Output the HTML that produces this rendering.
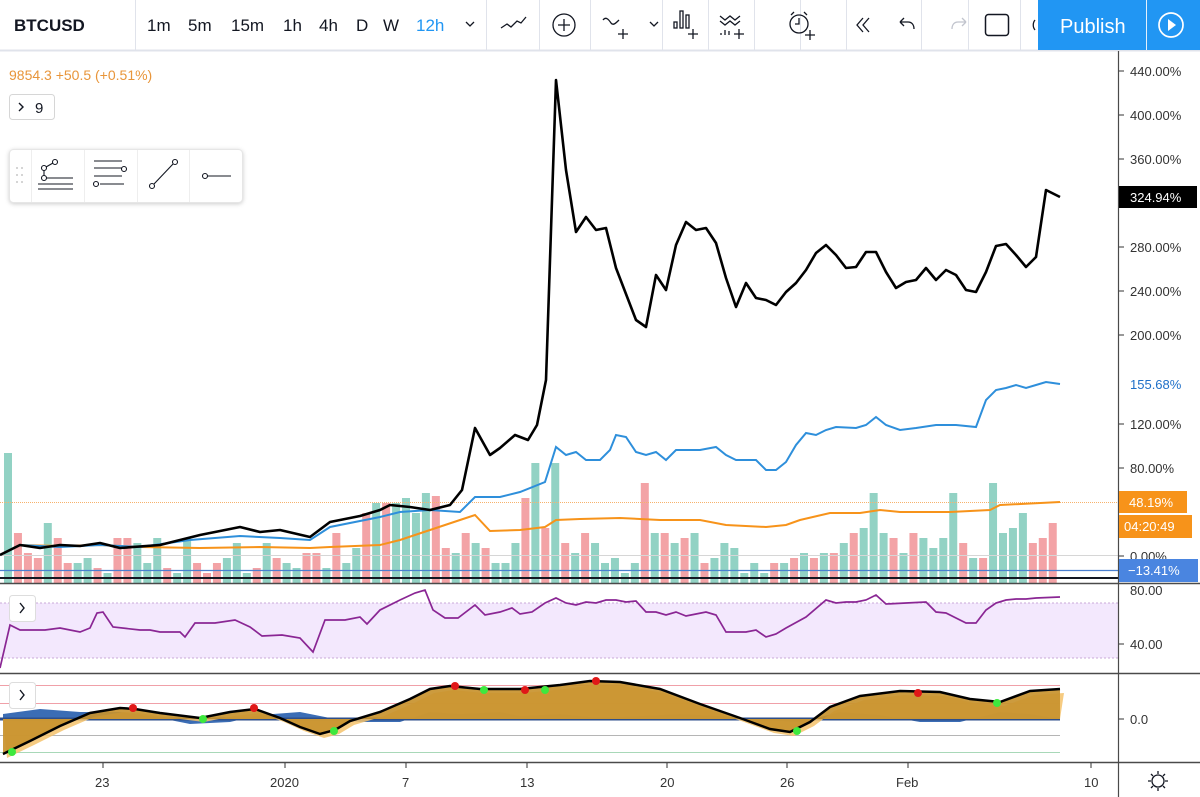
<!DOCTYPE html>
<html><head><meta charset="utf-8"><style>
body{margin:0;width:1200px;height:797px;overflow:hidden;background:#fff;font-family:"Liberation Sans","DejaVu Sans",sans-serif;}
svg{position:absolute;left:0;top:0}
</style></head><body>
<svg id="s" width="1200" height="797" xmlns="http://www.w3.org/2000/svg" font-family="Liberation Sans, DejaVu Sans, sans-serif">
<rect x="0" y="0" width="1200" height="50" fill="#fff"/>
<line x1="0" y1="50.5" x2="1200" y2="50.5" stroke="#e0e3eb" stroke-width="2"/>
<text x="14" y="31" font-size="17" font-weight="bold" fill="#131722">BTCUSD</text>
<line x1="135.5" y1="0" x2="135.5" y2="50" stroke="#e0e3eb"/>
<g font-size="17" fill="#131722">
<text x="147" y="31">1m</text><text x="188" y="31">5m</text><text x="231" y="31">15m</text><text x="283" y="31">1h</text><text x="319" y="31">4h</text><text x="356" y="31">D</text><text x="383" y="31">W</text><text x="416" y="31" fill="#2196f3">12h</text>
</g>
<path d="M466 22l4 4 4-4" fill="none" stroke="#131722" stroke-width="1.3"/>
<g stroke="#e0e3eb"><line x1="486.5" y1="0" x2="486.5" y2="50"/><line x1="539.5" y1="0" x2="539.5" y2="50"/><line x1="590.5" y1="0" x2="590.5" y2="50"/><line x1="662.5" y1="0" x2="662.5" y2="50"/><line x1="708.5" y1="0" x2="708.5" y2="50"/><line x1="754.5" y1="0" x2="754.5" y2="50"/><line x1="800.5" y1="0" x2="800.5" y2="50"/><line x1="846.5" y1="0" x2="846.5" y2="50"/><line x1="921.5" y1="0" x2="921.5" y2="50"/><line x1="968.5" y1="0" x2="968.5" y2="50"/><line x1="1020.5" y1="0" x2="1020.5" y2="50"/></g>
<g fill="none" stroke="#131722" stroke-width="1.3">
<path d="M501 28l6-4 4 3 6-6 4 2 5-6"/>
<circle cx="564" cy="25" r="11"/><path d="M564 19v12M558 25h12"/>
<path d="M603 20c3-4 6 0 8 3 2 3 5 0 8-3M623 29v10M618 34h10"/>
<path d="M650 22l4 4 4-4"/>
<rect x="674" y="22" width="3" height="6"/><rect x="680" y="11" width="3" height="17"/><rect x="686" y="15" width="3" height="13"/><path d="M693 29v10M688 34h10"/>
<path d="M720 16l5 4 5-4 5 4 5-4M720 21l5 4 5-4 5 4 5-4M739 29v10M734 34h10M721 33v2M725 30v5M729 31v4"/>
<circle cx="799" cy="24" r="9"/><path d="M799 18v6h-4M791 15l3-3M807 15l-3-3M810 30v10M805 35h10"/>
<path d="M863 18l-6 7 6 7M869 18l-6 7 6 7"/>
<path d="M900 22h8c4 0 6 3 6 7M900 22l4-4M900 22l4 4"/>
</g>
<path d="M952 29c0-4 2-7 6-7h8M966 22l-4-4M966 22l-4 4" fill="none" stroke="#c1c4cd" stroke-width="1.3"/>
<rect x="985.5" y="14.5" width="23" height="21" rx="3" fill="none" stroke="#131722" stroke-width="1.5"/>
<path d="M1035 20a8 8 0 0 0 0 10" fill="none" stroke="#131722" stroke-width="1.3"/>
<rect x="1038" y="0" width="162" height="50" fill="#2196f3"/>
<line x1="1146.5" y1="0" x2="1146.5" y2="50" stroke="#e3f0fc" stroke-width="1"/>
<text x="1060" y="33" font-size="20" fill="#fff">Publish</text>
<circle cx="1171" cy="25" r="12" fill="none" stroke="#fff" stroke-width="1.7"/>
<path d="M1168 19v12l8-6z" fill="#fff"/>

<rect x="0" y="603" width="1118" height="55" fill="#f3e8fd"/>
<line x1="0" y1="603" x2="1118" y2="603" stroke="#c8a8d8" stroke-dasharray="2,2"/>
<line x1="0" y1="658" x2="1118" y2="658" stroke="#c8a8d8" stroke-dasharray="2,2"/>
<g id="vol"></g>
<line x1="0" y1="502.5" x2="1118" y2="502.5" stroke="#f7b26c" stroke-width="1" stroke-dasharray="1,1"/>
<line x1="0" y1="555.5" x2="1118" y2="555.5" stroke="#d6d6d6"/>
<line x1="0" y1="570.5" x2="1118" y2="570.5" stroke="#4a7fd0" stroke-width="1.2"/>
<line x1="0" y1="578" x2="1118" y2="578" stroke="#131722" stroke-width="2"/>
<g id="lines"></g>
<line x1="0" y1="583.5" x2="1200" y2="583.5" stroke="#4a4a4a" stroke-width="1.5"/>
<line x1="0" y1="673.5" x2="1200" y2="673.5" stroke="#4a4a4a" stroke-width="1.5"/>
<line x1="0" y1="762.5" x2="1200" y2="762.5" stroke="#4a4a4a" stroke-width="1.5"/>
<line x1="1118.5" y1="51" x2="1118.5" y2="797" stroke="#4a4a4a" stroke-width="1.2"/>
<g font-size="13" fill="#333">
<text x="1130" y="76">440.00%</text><text x="1130" y="120">400.00%</text><text x="1130" y="164">360.00%</text><text x="1130" y="252">280.00%</text><text x="1130" y="296">240.00%</text><text x="1130" y="340">200.00%</text><text x="1130" y="429">120.00%</text><text x="1130" y="473">80.00%</text><text x="1130" y="561">0.00%</text>
<text x="1130" y="595">80.00</text><text x="1130" y="649">40.00</text><text x="1130" y="724">0.0</text>
</g>
<g stroke="#333"><path d="M1119 71h5M1119 115h5M1119 159h5M1119 247h5M1119 291h5M1119 335h5M1119 424h5M1119 468h5M1119 556h5M1119 644h5M1119 719h5M103 763v5M285 763v5M406 763v5M527 763v5M667 763v5M787 763v5M908 763v5M1091 763v5"/></g>
<rect x="1119" y="186" width="78" height="22" fill="#000"/><text x="1130" y="202" font-size="13" fill="#fff">324.94%</text>
<text x="1130" y="389" font-size="13" fill="#1e6fc8">155.68%</text>
<rect x="1119" y="491" width="68" height="22" fill="#f7931a"/><text x="1129" y="507" font-size="13" fill="#fff">48.19%</text>
<rect x="1119" y="515" width="73" height="23" fill="#f7931a"/><text x="1124" y="531" font-size="13" fill="#fff">04:20:49</text>
<rect x="1119" y="559" width="79" height="23" fill="#4a85e0"/><text x="1128" y="575" font-size="13" fill="#fff">−13.41%</text>
<g font-size="13" fill="#333">
<text x="95" y="787">23</text><text x="270" y="787">2020</text><text x="402" y="787">7</text><text x="520" y="787">13</text><text x="660" y="787">20</text><text x="780" y="787">26</text><text x="896" y="787">Feb</text><text x="1084" y="787">10</text>
</g>
<g fill="none" stroke="#131722" stroke-width="1.3"><circle cx="1158" cy="781" r="6"/><path d="M1158 771v3M1158 788v3M1148 781h3M1165 781h3M1151 774l2 2M1163 786l2 2M1151 788l2-2M1163 776l2-2"/></g>

<text x="9" y="80" font-size="14" fill="#e8953a">9854.3 +50.5 (+0.51%)</text>
<rect x="9.5" y="94.5" width="45" height="25" rx="3" fill="#fff" stroke="#d6d6d6"/>
<path d="M19 103l4 4-4 4" fill="none" stroke="#131722" stroke-width="1.4"/><text x="35" y="113" font-size="15" fill="#131722">9</text>
<rect x="9.5" y="149.5" width="233" height="53" rx="4" fill="#fff" stroke="#e6e6e6" style="filter:drop-shadow(0 1px 2px rgba(0,0,0,.2))"/>
<g stroke="#eee"><line x1="31.5" y1="150" x2="31.5" y2="202"/><line x1="84.5" y1="150" x2="84.5" y2="202"/><line x1="137.5" y1="150" x2="137.5" y2="202"/><line x1="189.5" y1="150" x2="189.5" y2="202"/></g>
<g fill="#c8c8c8"><circle cx="17" cy="168" r="1"/><circle cx="22" cy="168" r="1"/><circle cx="17" cy="175" r="1"/><circle cx="22" cy="175" r="1"/><circle cx="17" cy="182" r="1"/><circle cx="22" cy="182" r="1"/></g>
<g fill="none" stroke="#131722" stroke-width="1.1">
<circle cx="44" cy="168" r="2.5"/><circle cx="44" cy="178" r="2.5"/><circle cx="55" cy="162" r="2.5"/><path d="M46 167l7-4M44 170v6M47 178h26M38 184h35M38 189h35"/>
<path d="M94 161h28M94 168h28M94 176h28M100 184h24"/><circle cx="124" cy="169" r="2.5"/><circle cx="96" cy="184" r="2.5"/>
<circle cx="152" cy="186" r="2.5"/><circle cx="175" cy="162" r="2.5"/><path d="M154 184l19-20"/>
<circle cx="205" cy="176" r="2.5"/><path d="M208 176h23"/>
</g>
<rect x="9.5" y="595.5" width="26" height="26" rx="3" fill="#fff" stroke="#ddd"/><path d="M20 603l4 5-4 5" fill="none" stroke="#131722" stroke-width="1.4"/>
<rect x="9.5" y="682.5" width="26" height="26" rx="3" fill="#fff" stroke="#ddd"/><path d="M20 690l4 5-4 5" fill="none" stroke="#131722" stroke-width="1.4"/>
</svg>
<script>
function P(a){return a.map((p,i)=>(i?'L':'M')+p[0]+' '+p[1]).join('');}
var NS='http://www.w3.org/2000/svg';
function add(g,tag,at){var e=document.createElementNS(NS,tag);for(var k in at)e.setAttribute(k,at[k]);document.getElementById(g).appendChild(e);return e;}
var H=[130,50,30,25,60,45,20,20,25,15,10,45,45,40,20,45,15,10,45,20,10,20,25,40,10,15,40,25,20,15,30,30,15,50,20,35,70,80,80,80,85,70,90,60,35,30,50,40,35,20,20,40,85,120,55,50,40,30,50,40,20,25,10,20,90,50,50,40,45,50,20,25,40,35,10,20,10,20,20,25,30,25,30,30,40,50,55,45,50,45,30,50,45,35,45,90,40,25,25,45,50,55,45,40,45,60,35,25,25,25,22];
var C="gpppgppggpgppgggpggpppgggpgpggppgpggpgpgggggpgpgpgggpgpgpgpgggggggpgpgpggggggpgpgpgpgpgpgpgpggggpgpgggpppppggggggggggg";
for(var i=0;i<106;i++){var x=8+i*9.95;var h=H[i%H.length];var c=C[i]=='p'?'#f3a3a6':'#92d2c4';
 if(Math.abs(x-12)<5)h=130,c='#92d2c4';if(Math.abs(x-435)<5)h=87,c='#f3a3a6';if(Math.abs(x-555)<5)h=120,c='#92d2c4';if(Math.abs(x-645)<5)h=100,c='#f3a3a6';if(Math.abs(x-877)<5)h=90,c='#92d2c4';if(Math.abs(x-997)<5)h=100,c='#92d2c4';if(Math.abs(x-1018)<5)h=70,c='#92d2c4';
 if(x>1060)break;
 add('vol','rect',{x:x-4,y:583-h,width:8,height:h,fill:c});}
var O=[[3,755],[30,742],[60,727],[90,714],[120,709],[135,710],[160,714],[200,719],[230,713],[255,710],[280,719],[300,728],[320,735],[335,731],[350,722],[380,713],[410,700],[430,690],[450,687],[480,690],[520,690],[560,686],[590,682],[620,683],[660,690],[700,705],[740,719],[770,730],[790,733],[810,723],[830,708],[860,697],[900,692],[940,693],[970,700],[1000,703],[1030,692],[1060,690]];
[[0,685,'#f0a0a8'],[0,703,'#f0a0a8'],[0,735,'#b5b5b5'],[0,752,'#a8d8b8']].forEach(l=>add('lines','line',{x1:l[0],y1:l[1]+.5,x2:1060,y2:l[1]+.5,stroke:l[2]}));
var B=[[3,719],[3,714],[40,709],[80,712],[120,712],[150,716],[190,724],[230,722],[260,715],[300,712],[330,718],[360,722],[400,722],[430,712],[460,714],[500,712],[520,716],[560,714],[600,718],[640,716],[680,714],[720,716],[760,720],[800,722],[840,712],[880,715],[920,722],[960,722],[1000,712],[1030,714],[1060,719]];
add('lines','path',{d:P(B)+'L1060 719Z',fill:'#3b6db5'});
add('lines','line',{x1:0,y1:719,x2:1060,y2:719,stroke:'#2d4e8a','stroke-width':3});
add('lines','path',{d:P(O.map(p=>[p[0]+4,p[1]+3]))+'L1060 719L3 719Z',fill:'#f5c26b',opacity:0.85});
add('lines','path',{d:P(O)+'L1060 719L3 719Z',fill:'#c8922e',opacity:0.92});
add('lines','path',{d:P(O.map(p=>[p[0],p[1]-1])),fill:'none',stroke:'#000','stroke-width':2.5});
[[133,708,'#e01818'],[254,708,'#e01818'],[455,686,'#e01818'],[525,690,'#e01818'],[596,681,'#e01818'],[918,693,'#e01818'],[203,719,'#3ee83e'],[334,731,'#3ee83e'],[484,690,'#3ee83e'],[545,690,'#3ee83e'],[797,731,'#3ee83e'],[997,703,'#3ee83e'],[12,752,'#3ee83e']].forEach(d=>add('lines','circle',{cx:d[0],cy:d[1],r:4,fill:d[2]}));
var R=[[0,668],[10,625],[20,630],[45,630],[60,628],[80,632],[90,628],[97,613],[103,612],[113,627],[140,630],[150,630],[160,632],[180,632],[185,637],[195,623],[215,623],[235,620],[250,627],[262,636],[282,635],[300,638],[313,652],[325,620],[345,620],[360,617],[367,624],[380,610],[400,600],[415,593],[425,590],[433,610],[445,618],[458,618],[475,605],[485,615],[500,612],[512,608],[520,614],[532,612],[545,603],[556,598],[566,603],[576,605],[586,602],[596,603],[606,600],[616,600],[626,602],[636,601],[646,612],[656,612],[666,615],[676,612],[686,616],[696,614],[706,612],[716,615],[726,632],[746,632],[756,630],[766,637],[776,634],[786,628],[806,617],[826,600],[836,603],[846,602],[856,602],[866,600],[876,595],[886,604],[906,603],[926,602],[936,612],[946,613],[956,618],[966,623],[976,623],[986,610],[996,603],[1006,600],[1016,599],[1026,599],[1036,598],[1060,597]];
add('lines','path',{d:P(R),fill:'none',stroke:'#8a2694','stroke-width':1.7});
var OR=[[0,555],[20,545],[60,546],[100,545],[140,547],[200,548],[260,547],[310,548],[330,547],[380,545],[400,540],[430,530],[460,520],[475,515],[490,531],[520,530],[545,527],[556,520],[580,519],[620,518],[660,520],[700,520],[726,525],[766,527],[786,525],[800,520],[830,513],[860,513],[880,510],[900,512],[950,512],[990,510],[1000,505],[1060,502]];
add('lines','path',{d:P(OR),fill:'none',stroke:'#f7931a','stroke-width':2});
var BL=[[0,555],[20,545],[60,547],[100,545],[140,547],[190,540],[240,536],[280,538],[310,540],[330,527],[380,517],[400,512],[430,510],[460,512],[475,497],[500,497],[520,492],[545,482],[556,447],[566,455],[576,452],[586,460],[600,460],[610,450],[616,435],[626,437],[636,452],[646,455],[656,452],[666,460],[676,450],[700,450],[716,447],[726,455],[736,460],[756,460],[766,470],[776,470],[786,462],[796,445],[806,433],[816,435],[826,430],[836,427],[856,428],[866,425],[876,417],[886,425],[900,430],[916,428],[936,425],[956,425],[976,427],[986,400],[996,390],[1006,388],[1016,385],[1026,388],[1036,385],[1046,382],[1060,384]];
add('lines','path',{d:P(BL),fill:'none',stroke:'#2e8fdb','stroke-width':2});
var K=[[0,555],[20,545],[40,548],[60,545],[80,546],[100,543],[120,548],[160,545],[200,535],[240,527],[260,532],[280,530],[310,537],[330,522],[360,516],[380,510],[390,505],[410,507],[430,510],[450,505],[462,490],[475,428],[490,455],[500,448],[515,435],[528,440],[537,425],[546,380],[556,80],[566,170],[576,232],[586,217],[596,230],[606,228],[616,268],[636,320],[646,327],[656,275],[666,290],[676,245],[686,222],[696,230],[706,228],[716,243],[726,278],[736,307],[746,283],[756,298],[766,300],[776,305],[786,292],[796,283],[806,270],[816,253],[826,245],[836,255],[846,268],[856,267],[866,252],[876,252],[886,272],[896,288],[906,282],[916,280],[926,268],[936,280],[946,270],[956,275],[966,290],[976,292],[986,272],[996,246],[1006,244],[1016,255],[1026,267],[1036,257],[1046,190],[1060,197]];
add('lines','path',{d:P(K),fill:'none',stroke:'#000','stroke-width':2.6,'stroke-linejoin':'round'});
</script>
</body></html>
